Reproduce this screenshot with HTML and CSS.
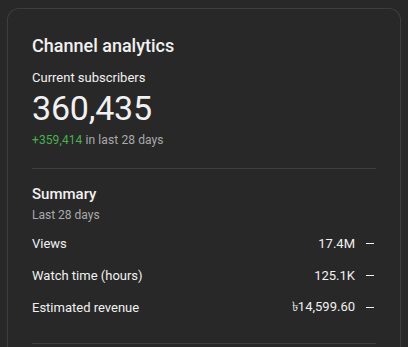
FILE: index.html
```html
<!DOCTYPE html>
<html lang="en">
<head>
    <meta charset="UTF-8">
    <meta name="viewport" content="width=device-width, initial-scale=1.0">
    <title>Channel analytics</title>
    <link rel="stylesheet" href="styles.css">
</head>
<body>
    <div class="analytics-card">
        <!-- Subscribers -->
        <h2 class="card-title">Channel analytics</h2>
        <p class="subs-label">Current subscribers</p>
        <p class="subs-count">360,435</p>
        <p class="subs-change"><span class="change-up">+359,414</span> in last 28 days</p>

        <div class="divider"></div>

        <!-- Summary -->
        <h3 class="summary-title">Summary</h3>
        <p class="summary-period">Last 28 days</p>

        <div class="summary-rows">
            <div class="summary-row">
                <span class="row-label">Views</span>
                <span class="row-value">17.4M</span>
                <span class="row-trend"></span>
            </div>
            <div class="summary-row">
                <span class="row-label">Watch time (hours)</span>
                <span class="row-value">125.1K</span>
                <span class="row-trend"></span>
            </div>
            <div class="summary-row">
                <span class="row-label">Estimated revenue</span>
                <span class="row-value">৳14,599.60</span>
                <span class="row-trend"></span>
            </div>
        </div>

        <div class="divider"></div>
    </div>
</body>
</html>
```

FILE: styles.css
```css
/* Basic reset */
* {
    margin: 0;
    padding: 0;
    box-sizing: border-box;
}

body {
    font-family: Roboto, "Liberation Sans", sans-serif;
    background-color: #282828;
    color: #f1f1f1;
    padding: 8px 7px 0 7px;
    height: 100vh;
    overflow: hidden;
}

/* Card */
.analytics-card {
    border: 1px solid #3e3e3e;
    border-bottom: none;
    border-radius: 12px 12px 0 0;
    padding: 25px 24px 0 24px;
    height: 100%;
}

.card-title {
    font-size: 18px;
    font-weight: 500;
    line-height: 24px;
}

.subs-label {
    font-size: 13px;
    line-height: 20px;
    margin-top: 10px;
}

.subs-count {
    font-size: 34px;
    line-height: 40px;
    font-weight: 400;
    letter-spacing: -0.2px;
}

.subs-change {
    font-size: 12px;
    line-height: 16px;
    margin-top: 4px;
    color: #aaaaaa;
    letter-spacing: 0.1px;
}

.change-up {
    color: #4caf50;
}

.divider {
    height: 1px;
    background-color: #3f3f3f;
    margin-top: 20px;
}

/* Summary */
.summary-title {
    font-size: 15px;
    font-weight: 500;
    line-height: 20px;
    margin-top: 15px;
}

.summary-period {
    font-size: 12px;
    line-height: 16px;
    margin-top: 3px;
    color: #aaaaaa;
}

.summary-rows {
    margin-top: 4px;
}

.summary-row {
    display: flex;
    align-items: center;
    height: 32px;
    font-size: 13px;
}

.row-label {
    flex: 1;
}

.row-trend {
    width: 8px;
    height: 1px;
    background-color: #f1f1f1;
    margin: 0 2px 0 11px;
}
```
